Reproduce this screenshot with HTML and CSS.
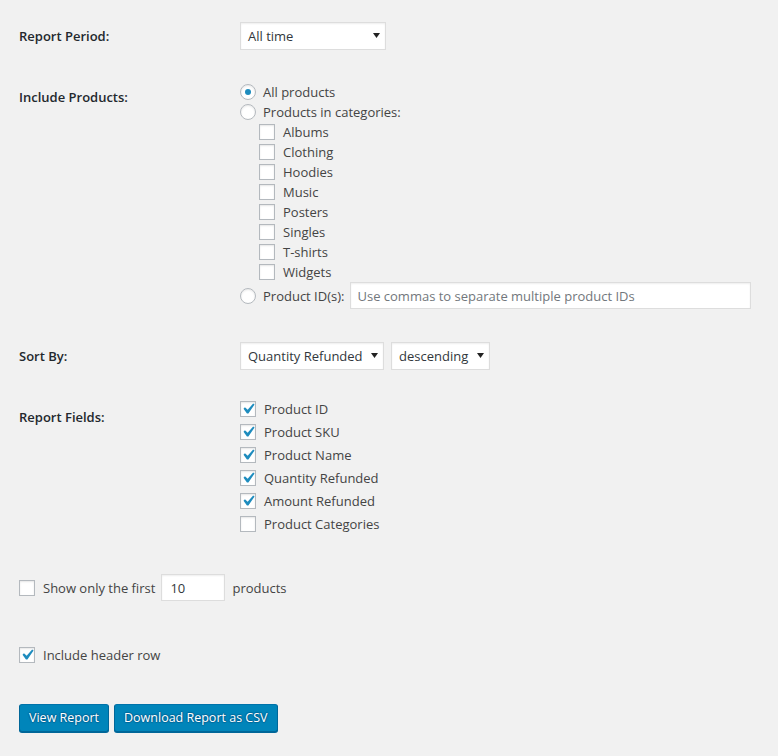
FILE: index.html
```html
<!DOCTYPE html>
<html lang="en">
<head>
    <meta charset="UTF-8">
    <title>Refunds Report</title>
    <link rel="stylesheet" href="styles.css">
</head>
<body>
<div class="wrap">

    <div class="form-row period-row">
        <div class="row-label">Report Period:</div>
        <div class="row-field">
            <div class="select select-period"><span>All time</span><svg width="7" height="5" viewBox="0 0 7 5"><path d="M0 0h7L3.5 5z"/></svg></div>
        </div>
    </div>

    <div class="form-row products-row">
        <div class="row-label">Include Products:</div>
        <div class="row-field">
            <div class="line"><span class="radio checked"></span>All products</div>
            <div class="line"><span class="radio"></span>Products in categories:</div>
            <div class="cats">
                <div class="line"><span class="box"></span>Albums</div>
                <div class="line"><span class="box"></span>Clothing</div>
                <div class="line"><span class="box"></span>Hoodies</div>
                <div class="line"><span class="box"></span>Music</div>
                <div class="line"><span class="box"></span>Posters</div>
                <div class="line"><span class="box"></span>Singles</div>
                <div class="line"><span class="box"></span>T-shirts</div>
                <div class="line"><span class="box"></span>Widgets</div>
            </div>
            <div class="line ids-line"><span class="radio"></span>Product ID(s):<input class="text ids" type="text" placeholder="Use commas to separate multiple product IDs"></div>
        </div>
    </div>

    <div class="form-row sort-row">
        <div class="row-label">Sort By:</div>
        <div class="row-field selects">
            <div class="select select-field"><span>Quantity Refunded</span><svg width="7" height="5" viewBox="0 0 7 5"><path d="M0 0h7L3.5 5z"/></svg></div>
            <div class="select select-order"><span>descending</span><svg width="7" height="5" viewBox="0 0 7 5"><path d="M0 0h7L3.5 5z"/></svg></div>
        </div>
    </div>

    <div class="form-row fields-row">
        <div class="row-label">Report Fields:</div>
        <div class="row-field">
            <div class="field-line"><span class="box checked"><svg width="16" height="16" viewBox="2.5 2.5 15 15"><path d="M14.83 4.89l1.34.94-5.81 8.38H9.02L5.78 9.67l1.34-1.25 2.57 2.4z"/></svg></span>Product ID</div>
            <div class="field-line"><span class="box checked"><svg width="16" height="16" viewBox="2.5 2.5 15 15"><path d="M14.83 4.89l1.34.94-5.81 8.38H9.02L5.78 9.67l1.34-1.25 2.57 2.4z"/></svg></span>Product SKU</div>
            <div class="field-line"><span class="box checked"><svg width="16" height="16" viewBox="2.5 2.5 15 15"><path d="M14.83 4.89l1.34.94-5.81 8.38H9.02L5.78 9.67l1.34-1.25 2.57 2.4z"/></svg></span>Product Name</div>
            <div class="field-line"><span class="box checked"><svg width="16" height="16" viewBox="2.5 2.5 15 15"><path d="M14.83 4.89l1.34.94-5.81 8.38H9.02L5.78 9.67l1.34-1.25 2.57 2.4z"/></svg></span>Quantity Refunded</div>
            <div class="field-line"><span class="box checked"><svg width="16" height="16" viewBox="2.5 2.5 15 15"><path d="M14.83 4.89l1.34.94-5.81 8.38H9.02L5.78 9.67l1.34-1.25 2.57 2.4z"/></svg></span>Amount Refunded</div>
            <div class="field-line"><span class="box"></span>Product Categories</div>
        </div>
    </div>

    <div class="limit-row">
        <span class="box"></span>Show only the first<input class="text limit" type="text" value="10">products
    </div>

    <div class="header-row">
        <span class="box checked"><svg width="16" height="16" viewBox="2.5 2.5 15 15"><path d="M14.83 4.89l1.34.94-5.81 8.38H9.02L5.78 9.67l1.34-1.25 2.57 2.4z"/></svg></span>Include header row
    </div>

    <div class="actions">
        <button class="button">View Report</button>
        <button class="button">Download Report as CSV</button>
    </div>

</div>
</body>
</html>
```

FILE: styles.css
```css
*{padding: 0; margin: 0; box-sizing: border-box;}
body{background: #f1f1f1; color: #444; font-family: "Open Sans", "Noto Sans", sans-serif; font-size: 13px;}
.wrap{padding: 22px 0 40px 19px;}

.form-row{display: grid; grid-template-columns: 221px 1fr;}
.row-label{color: #23282d; font-weight: 600; line-height: 17px; padding-top: 7px;}
.period-row .row-label, .sort-row .row-label{align-self: center; padding-top: 0;}
.fields-row .row-label{padding-top: 12px;}

.products-row{margin-top: 32px;}
.sort-row{margin-top: 33px;}
.fields-row{margin-top: 27px;}

/* selects */
.select{display: inline-flex; align-items: center; justify-content: space-between; height: 28px; padding: 0 5px 0 7px; background: #fff; border: 1px solid #ddd; box-shadow: inset 0 1px 2px rgba(0,0,0,.07); color: #32373c;}
.select svg{fill: #222; margin-bottom: 2px;}
.select-period{width: 146px;}
.select-field{width: 144px;}
.select-order{width: 99px;}
.selects{display: flex; gap: 7px;}

/* radio + checkbox */
.line{display: flex; align-items: center; height: 20px;}
.cats{padding-left: 19px;}
.radio, .box{flex: none; display: inline-block; width: 16px; height: 16px; margin-right: 8px; background: #fff; border: 1px solid #b4b9be; box-shadow: inset 0 1px 2px rgba(0,0,0,.1);}
.radio{border-radius: 50%; margin-right: 7px; position: relative;}
.radio.checked::before{content: ""; position: absolute; left: 4px; top: 4px; width: 6px; height: 6px; border-radius: 50%; background: #1e8cbe;}
.box svg{display: block; margin: -1px; fill: #1e8cbe;}

.ids-line{height: 27px;}
.text{height: 27px; padding: 0 5px; background: #fff; border: 1px solid #ddd; box-shadow: inset 0 1px 2px rgba(0,0,0,.07); font: inherit; color: #32373c; outline: none;}
.text::placeholder{color: #72777c;}
.ids{flex: 1; margin-left: 6px; margin-right: 27px; padding: 0 6px;}

.field-line{display: flex; align-items: center; height: 23px;}

.limit-row{display: flex; align-items: center; margin-top: 39px;}
.limit{width: 64px; margin: 0 7px 0 6px; padding: 0 8px;}

.header-row{display: flex; align-items: center; height: 20px; margin-top: 44px;}

.actions{display: flex; gap: 5px; margin-top: 39px;}
.button{height: 28px; padding: 0 9px 1px; background: #0085ba; border: 1px solid #0073aa; border-color: #0073aa #006799 #006799; border-radius: 3px; box-shadow: 0 1px 0 #006799; color: #fff; font: inherit; font-size: 12.5px; text-shadow: 0 -1px 1px #006799, 1px 0 1px #006799, 0 1px 1px #006799, -1px 0 1px #006799;}
```
